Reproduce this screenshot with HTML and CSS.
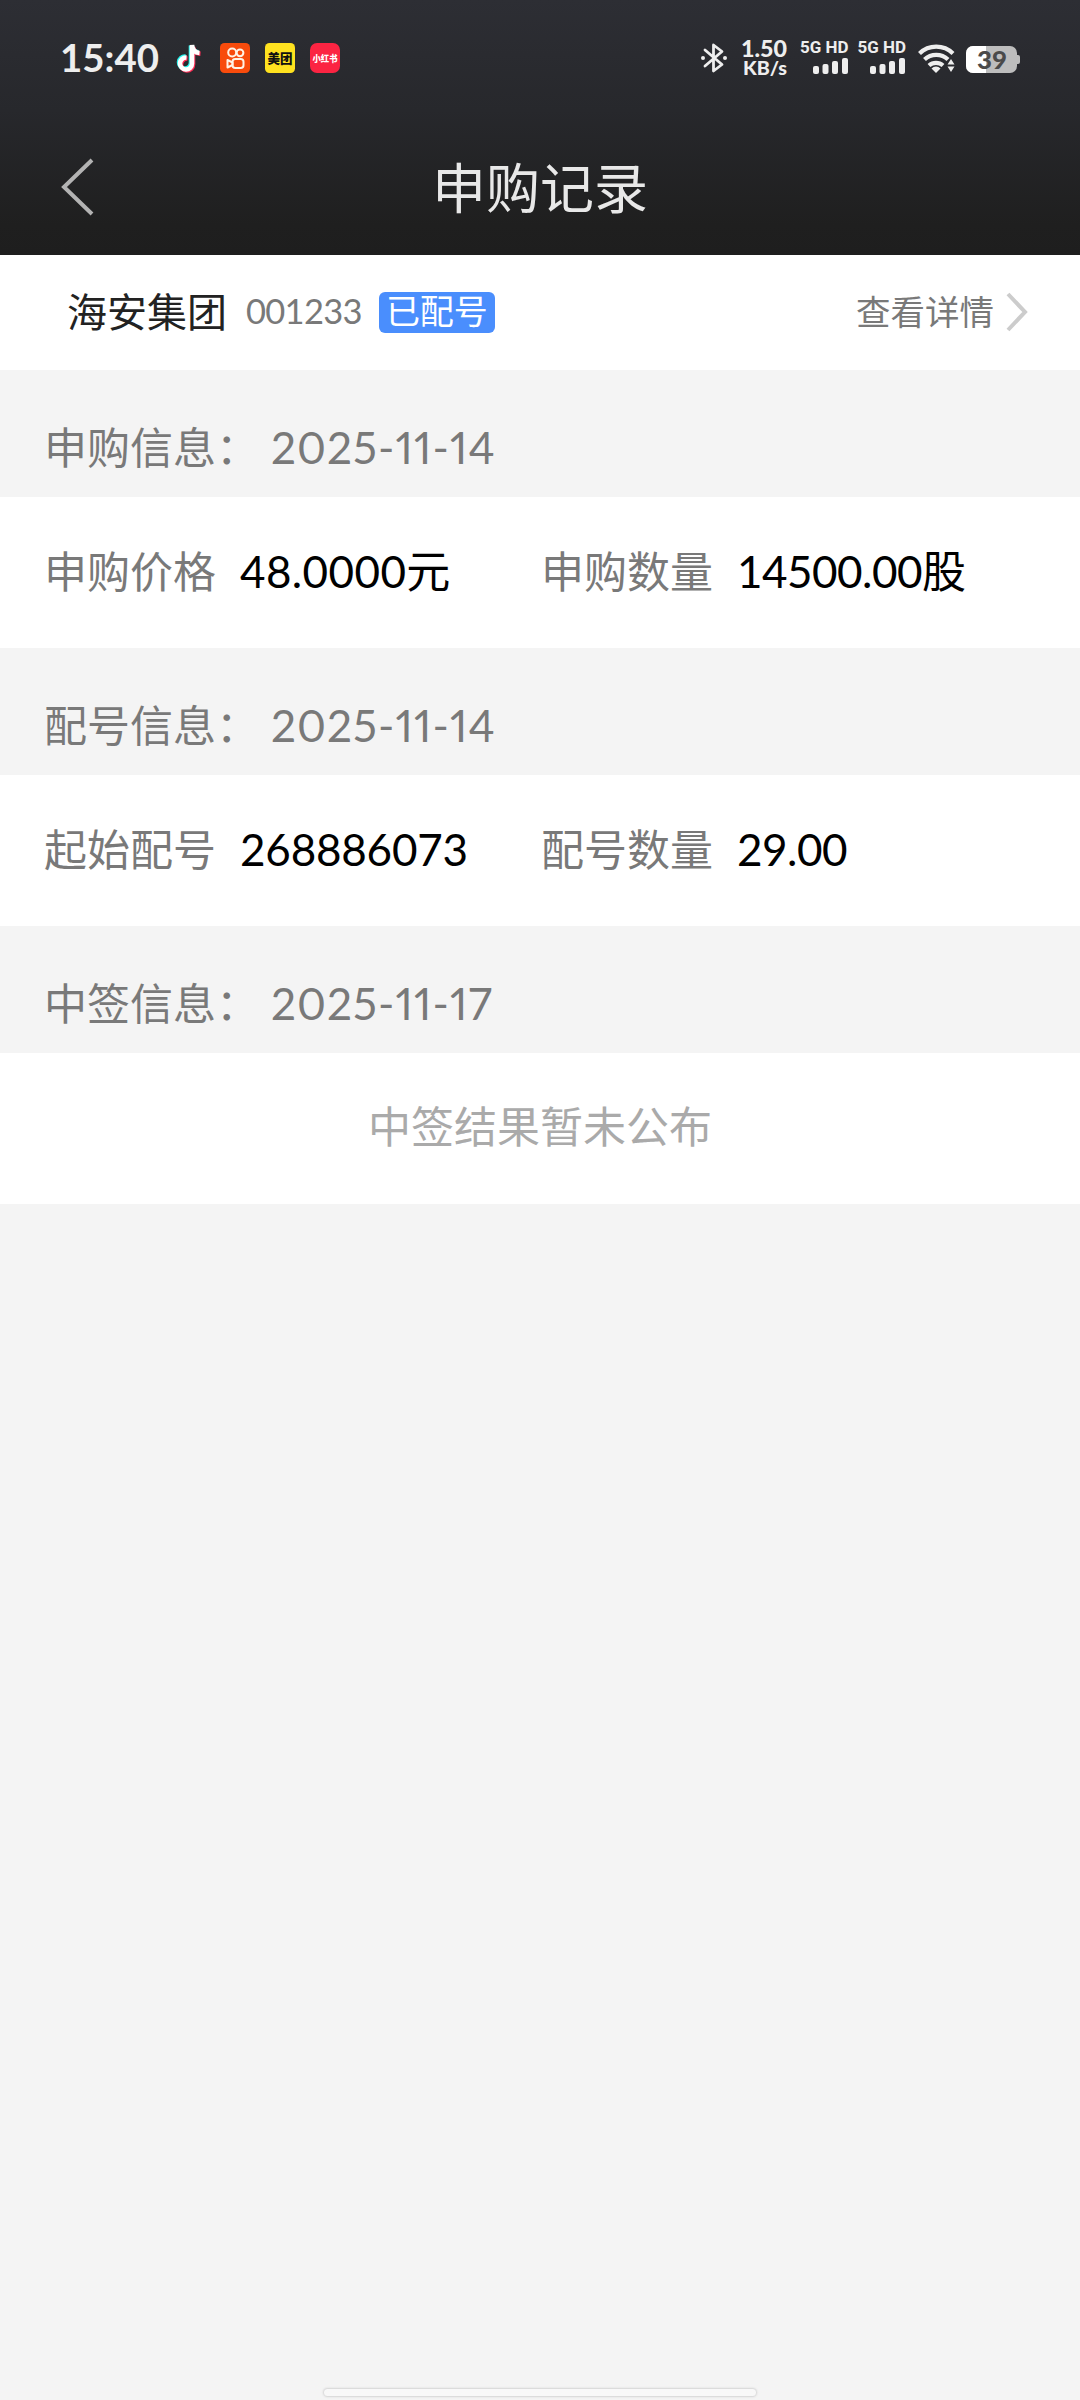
FILE: index.html
```html
<!DOCTYPE html>
<html lang="zh-CN">
<head>
<meta charset="utf-8">
<title>申购记录</title>
<link rel="stylesheet" href="styles.css">
</head>
<body>
<header class="top">
  <div class="status">
    <svg class="status-left" width="360" height="100" viewBox="0 0 360 100">
      <text class="clock" x="60" y="71.500" textLength="99" lengthAdjust="spacingAndGlyphs">15:40</text>
      <g fill="none" stroke-width="4.600">
        <path stroke="#25f4ee" d="M185.500 56.500a6 6 0 1 0 5.500 6V45.500c.6 4.500 3.500 6.500 7.500 6.800"/>
        <path stroke="#fe2c55" d="M187.500 58.500a6 6 0 1 0 5.500 6V47c.6 4.500 3.500 6.500 7.500 6.800"/>
        <path stroke="#fff" d="M186.500 57.500a6 6 0 1 0 5.500 6V45c.6 5.500 3.500 7.700 7.500 8"/>
      </g>
      <rect x="220" y="43" width="30" height="30" rx="4.500" fill="#f84b0c"/>
      <g fill="none" stroke="#fff3e6" stroke-width="2" stroke-linejoin="round">
        <circle cx="232.200" cy="52.500" r="4"/>
        <circle cx="240" cy="52.800" r="3.400"/>
        <rect x="232.500" y="59" width="11" height="9" rx="2.800"/>
        <path d="M232.500 62.500l-5-2.500v7.500l5-2.500z"/>
      </g>
      <rect x="265" y="43" width="30" height="30" rx="4.500" fill="#ffe21f"/>
      <text class="logo logo-mt" x="267.500" y="63" textLength="25" lengthAdjust="spacingAndGlyphs">美团</text>
      <rect x="310" y="43" width="30" height="30" rx="7" fill="#fb2442"/>
      <text class="logo logo-xhs" x="312.500" y="61.700" textLength="25" lengthAdjust="spacingAndGlyphs">小红书</text>
    </svg>
    <svg class="status-right" width="400" height="100" viewBox="680 0 400 100">
      <path d="M705 50l17 14.500-8.500 6.500V45l8.500 6.500L705 66" fill="none" stroke="#eee" stroke-width="2.800" stroke-linejoin="round" stroke-linecap="round"/>
      <circle cx="703" cy="58" r="2" fill="#eee"/><circle cx="725" cy="58" r="2" fill="#eee"/>
      <text class="st" x="741" y="56.500" font-size="22" textLength="46" lengthAdjust="spacingAndGlyphs">1.50</text>
      <text class="st" x="743" y="74.800" font-size="18.500" textLength="44" lengthAdjust="spacingAndGlyphs">KB/s</text>
      <text class="st net" x="800" y="53" textLength="48.500" lengthAdjust="spacingAndGlyphs">5G HD</text>
      <text class="st net" x="857.500" y="53" textLength="48.500" lengthAdjust="spacingAndGlyphs">5G HD</text>
      <g fill="#eee">
        <rect x="813" y="66" width="6" height="8" rx="2"/><rect x="822.500" y="64" width="6" height="10" rx="2"/><rect x="832" y="61" width="6" height="13" rx="2"/><rect x="842" y="58" width="6" height="16" rx="2"/>
        <rect x="870" y="66" width="6" height="8" rx="2"/><rect x="879.500" y="64" width="6" height="10" rx="2"/><rect x="889" y="61" width="6" height="13" rx="2"/><rect x="899" y="58" width="6" height="16" rx="2"/>
        <path d="M936 73l-4.500-4.600a6.500 6.500 0 0 1 9 0z"/>
        <path d="M951 59l3.500 5.500h-7zM951 72l3.500-5.500h-7z"/>
      </g>
      <g fill="none" stroke="#eee" stroke-width="4.200">
        <path d="M919.500 53.500a24 24 0 0 1 33.500 0"/>
        <path d="M924.500 59.500a17 17 0 0 1 23.500 0"/>
        <path d="M929 65.500a10.500 10.500 0 0 1 14 0"/>
      </g>
      <rect x="966" y="46" width="51" height="27" rx="7" fill="#bdbdbd"/>
      <path d="M986 46h-13a7 7 0 0 0-7 7v13a7 7 0 0 0 7 7h13z" fill="#fff"/>
      <path d="M1017 55h1a2 2 0 0 1 2 2v5a2 2 0 0 1-2 2h-1z" fill="#bdbdbd"/>
      <text class="st batt" x="977" y="68.500" font-size="24.500" textLength="30" lengthAdjust="spacingAndGlyphs">39</text>
    </svg>
  </div>
  <nav class="nav">
    <svg class="back" width="40" height="66" viewBox="0 0 40 66"><path d="M35 6L7 33l28 27" fill="none" stroke="#b3b3b3" stroke-width="4"/></svg>
    <h1 class="title">申购记录</h1>
  </nav>
</header>
<main>
  <section class="stock">
    <span class="name">海安集团</span>
    <span class="code">001233</span>
    <span class="badge">已配号</span>
    <a class="detail">查看详情</a>
    <svg class="more" width="24" height="42" viewBox="0 0 24 42"><path d="M3 3l17 18L3 39" fill="none" stroke="#ccc" stroke-width="4"/></svg>
  </section>

  <h2 class="head"><span class="caption">申购信息：</span><span class="date">2025-11-14</span></h2>
  <section class="row">
    <div class="cell"><span class="label">申购价格</span><span class="value price">48.0000元</span></div>
    <div class="cell"><span class="label">申购数量</span><span class="value">14500.00股</span></div>
  </section>

  <h2 class="head"><span class="caption">配号信息：</span><span class="date">2025-11-14</span></h2>
  <section class="row">
    <div class="cell"><span class="label">起始配号</span><span class="value serial">268886073</span></div>
    <div class="cell"><span class="label">配号数量</span><span class="value count">29.00</span></div>
  </section>

  <h2 class="head"><span class="caption">中签信息：</span><span class="date">2025-11-17</span></h2>
  <section class="row empty">中签结果暂未公布</section>
</main>
<footer class="gesture"><div class="pill"></div></footer>
</body>
</html>
```
FILE: styles.css
```css
* { box-sizing: border-box; }
body {
  margin: 0;
  width: 1080px;
  height: 2400px;
  display: flex;
  flex-direction: column;
  background: #f4f4f4;
  font-family: Lato, "Noto Sans CJK SC", sans-serif;
  font-size: 43px;
  color: #797979;
  overflow: hidden;
}
h1, h2 { margin: 0; font-weight: 400; font-size: inherit; }
main { flex: 1; }
.top {
  height: 255px;
  background: linear-gradient(#2d2e34 0, #27282c 110px, #1f1f1f 225px, #1e1e1e);
}
.status { display: flex; justify-content: space-between; height: 100px; }
.clock { font-size: 39px; font-weight: 700; fill: #eee; }
.st { font-weight: 900; fill: #eee; }
.net { font-family: Roboto, sans-serif; font-size: 16.5px; font-weight: 700; }
.batt { fill: #4a4a4a; }
.logo { font-family: "Noto Sans CJK SC", sans-serif; font-weight: 900; }
.logo-mt { font-size: 13px; fill: #111; }
.logo-xhs { font-size: 9px; fill: #fff; }
.nav {
  height: 155px;
  display: grid;
  grid-template-columns: 200px 1fr 200px;
  align-items: center;
}
.back { margin: 18px 0 0 57px; }
.title {
  font-size: 54px;
  line-height: 80px;
  padding-top: 22px;
  text-align: center;
  color: #e8e8e8;
}
.stock {
  height: 115px;
  display: flex;
  align-items: center;
  padding: 0 51px 5px 67px;
  background: #fff;
}
.name { font-size: 40px; color: #222; }
.code { margin-left: 19px; font-size: 34.5px; letter-spacing: -0.7px; }
.badge {
  width: 116px;
  height: 41px;
  margin: 5px 0 0 17px;
  border-radius: 6px;
  background: #4a8efd;
  color: #fff;
  font-size: 34px;
  line-height: 38px;
  text-align: center;
}
.detail { margin-left: auto; font-size: 34.5px; }
.more { margin: 3px 0 0 11px; }
.head {
  height: 127px;
  padding: 27px 0 0 44px;
  display: flex;
  align-items: center;
  gap: 12px;
}
.caption { padding-bottom: 5px; }
.date, .value { font-size: 44px; }
.date { font-variant-numeric: proportional-nums; letter-spacing: 1.1px; }
.row {
  height: 151px;
  display: grid;
  grid-template-columns: 497px 1fr;
  align-items: center;
  padding: 0 0 7px 44px;
  background: #fff;
}
.cell { display: flex; align-items: center; gap: 24px; }
.value { color: #000; letter-spacing: -0.5px; }
.price { letter-spacing: 0.4px; }
.serial { letter-spacing: -0.2px; }
.serial, .count { padding-top: 4px; }
.empty { display: flex; justify-content: center; padding: 0 0 9px; color: #aaa; }
.gesture { height: 11px; display: flex; justify-content: center; align-items: flex-start; }
.pill {
  width: 432px;
  height: 7px;
  border-radius: 4px;
  background: #f8f8f8;
  box-shadow: 0 0 2px 1px #d4d4d4;
}
```
